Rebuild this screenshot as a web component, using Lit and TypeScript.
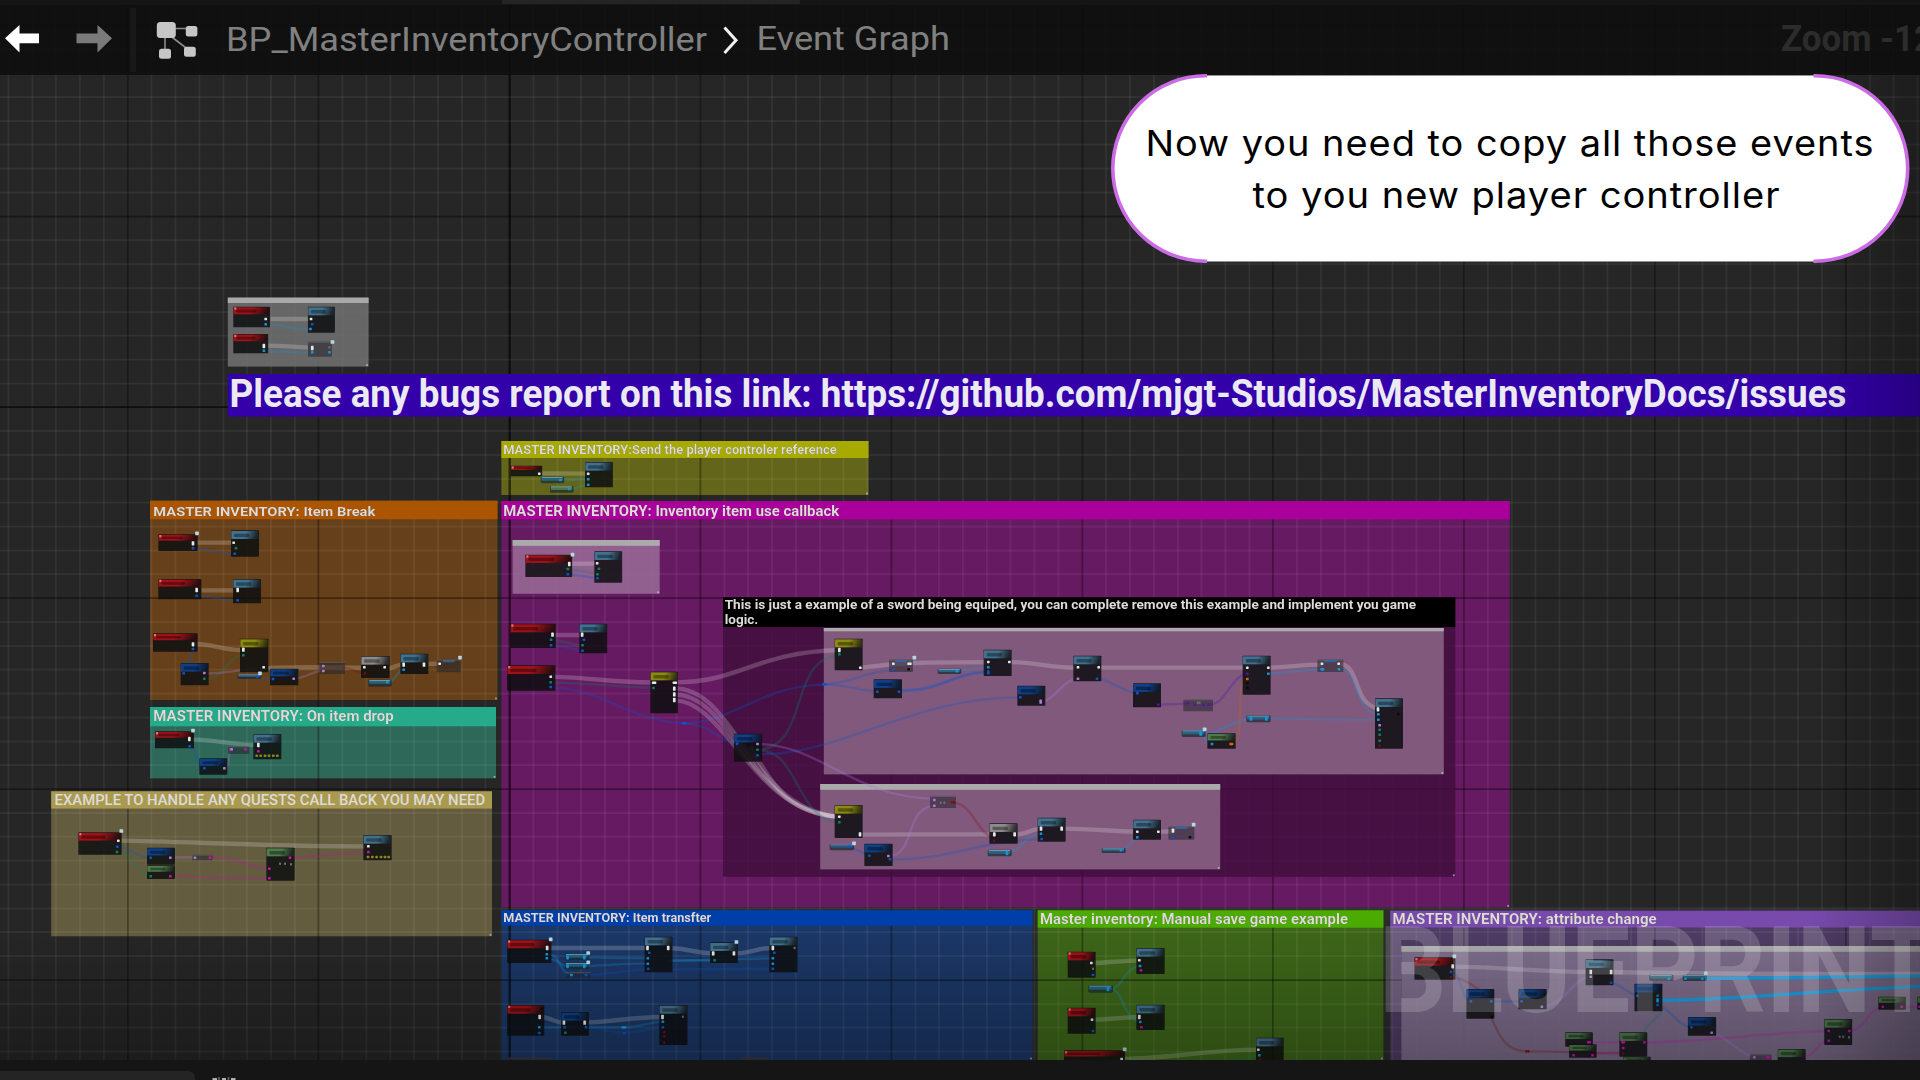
import { LitElement, html, svg, css } from "lit";
import { customElement } from "lit/decorators.js";

/** A free-canvas area with its own local units. Lists are "kind numbers…" entries split by ";". */
interface Region {
  x: number;
  y: number;
  sx: number;
  sy: number;
  wires: string;
  nodes: string;
  pins: string;
}

const COLORS: Record<string, string> = {
  w: "#e8e8e8", b: "#0a55cc", c: "#1496dc", t: "#0a8068", m: "#d00fac",
  v: "#b07ce0", r: "#840a0a", o: "#d8620a", p: "#5510b0", y: "#8a8820",
  k: "#0b0b0d", g: "#6d6d70", s: "#b4d8e4",
};

const REGIONS: Region[] = [
  // link box at the top
  {
    x: 0, y: 0, sx: 1.6333, sy: 3,
    wires: `W 442 957 C 470 957 480 957 503 957; W 438 1037 C 470 1037 480 1042 503 1042; c 442 974 C 470 976 475 988 503 990; c 438 1054 C 470 1054 480 1058 503 1058`,
    nodes: `R 381 920 441 982; L 503 920 547 998; R 381 1002 438 1060; e 503 1024 542 1070`,
    pins: `w 434 957; c 434 973; w 508 957; b 510 973; c 507 987; W 431 1038; c 431 1052; W 510 1044; c 510 1057; g 538 1042; c 538 1057; s 543 1026`,
  },
  // item break, item drop, quests
  {
    x: 40, y: 480, sx: 3, sy: 3,
    wires: `W 470 188 C 500 188 550 188 578 188; b 466 207 C 500 205 540 220 578 220; W 484 331 C 520 331 550 331 580 331; b 476 348 C 510 348 550 361 586 361;
      W 465 492 C 510 490 550 510 602 510; t 500 595 C 560 590 560 530 608 527; v 500 580 C 570 582 620 562 690 562; W 685 564 C 770 560 850 562 965 563; b 455 515 C 455 530 445 540 440 550; v 765 595 C 800 595 810 575 845 573; r 905 563 C 940 563 950 580 970 580; W 1045 565 C 1060 565 1070 554 1085 554; W 1165 552 L 1195 551; c 1050 605 C 1065 600 1070 575 1090 568; b 665 595 L 695 597;
      W 455 778 C 520 778 580 795 650 795; b 455 800 C 475 815 470 850 485 862; v 558 862 C 575 850 560 815 572 808;
      W 240 1082 C 420 1084 720 1100 980 1099; b 236 1100 C 280 1105 280 1130 330 1132; t 236 1116 C 280 1120 290 1180 328 1188; v 400 1132 L 460 1132; m 515 1132 C 590 1132 620 1160 685 1166; m 400 1189 C 500 1190 600 1195 685 1195; m 760 1133 C 850 1130 900 1118 980 1117`,
    nodes: `R 355 163 473 213; L 573 151 657 230; R 355 297 484 358; L 579 297 663 370; R 339 460 473 515; Y 600 476 685 577; D 422 549 506 616; u 592 582 664 597; D 690 566 775 616; e 838 545 915 582; G 963 528 1049 594; C 985 599 1055 620; L 1081 521 1165 582; f 1190 538 1262 577;
      R 345 754 462 805; L 640 762 724 838; e 564 798 628 822; D 478 835 562 884;
      R 115 1057 245 1124; D 321 1103 405 1154; N 321 1156 405 1197; e 457 1123 518 1141; N 679 1103 764 1202; L 970 1065 1055 1141`,
    pins: `W 459 190; b 459 205; s 471 160; w 581 188; t 588 205; b 584 221; W 470 330; b 470 347; W 593 330; b 593 361; W 459 493; b 459 507; W 610 509; t 610 526; w 671 562; b 431 580; v 493 579; t 493 596; s 660 580; b 652 590; b 699 597; v 761 596; v 850 558; v 850 573; w 973 562; r 975 580; w 1034 562; c 1042 607; W 1091 554; c 1091 569; W 1152 554; w 1199 551; s 1260 533;
      W 448 777; b 449 799; s 459 752; m 571 808; v 575 808; m 616 808; W 655 795; m 655 814; y 650 827; y 662 827; y 675 827; y 687 827; y 700 827; y 712 827; b 493 865; v 553 865;
      w 235 1082; b 232 1100; t 231 1116; s 244 1053; b 332 1133; v 391 1133; t 332 1189; m 391 1189; v 465 1133; m 510 1133; m 750 1133; m 688 1166; m 688 1195; g 753 1153; g 735 1151; g 720 1151; w 985 1099; m 985 1116; y 984 1131; y 997 1131; y 1010 1131; y 1023 1131; y 1035 1131; y 1046 1131`,
  },
  // player controller reference and the left half of the item use callback
  {
    x: 490, y: 430, sx: 2.8, sy: 3,
    wires: `W 140 130 L 272 131; c 205 150 L 275 148; c 230 176 C 250 175 250 165 275 164; W 228 401 L 296 401; t 220 417 L 300 431; b 220 432 L 300 445; W 180 615 L 256 615; t 180 630 L 260 648; b 180 646 L 260 662;
      W 172 740 C 290 744 360 758 460 757; t 172 758 C 290 758 360 773 458 773; b 172 772 C 330 780 380 870 540 880; b 540 880 C 620 880 640 935 690 941; b 540 880 C 680 880 760 765 935 764;
      W 520 757 C 700 757 740 668 975 660; W 516 775 C 690 775 720 1130 975 1160; W 516 793 C 680 793 720 1140 975 1160; W 516 811 C 660 811 740 1150 975 1160; W 730 950 C 800 1090 850 1150 975 1160;
      t 749 960 C 900 950 830 690 978 675; t 749 960 C 870 960 850 1165 978 1177; b 749 972 C 980 980 1180 800 1485 802; v 749 942 C 930 945 1010 1100 1242 1106`,
    nodes: `R 58 107 146 139; L 266 96 344 172; C 142 140 208 160; j 168 168 234 188; R 99 374 230 441; L 292 364 370 458; R 57 581 184 654; L 250 581 328 670; R 48 706 183 782; Y 449 725 526 850; D 683 911 762 995`,
    pins: `w 138 131; w 275 131; c 275 148; c 275 164; c 197 150; c 222 177; s 231 374; W 222 402; t 218 417; b 218 433; w 300 400; t 305 416; t 301 433; b 301 445; W 175 614; t 171 629; b 171 646; W 258 614; b 263 629; t 259 646; b 259 662; w 170 740; t 170 757; b 170 771; w 457 758; w 462 758; t 458 774; w 515 758; w 520 758; W 516 776; W 516 793; W 516 810; b 692 941; v 749 942; t 749 959; b 749 976; b 540 880; b 546 880`,
  },
  // sword example, left part
  {
    x: 800, y: 580, sx: 3, sy: 3,
    wires: `W 185 263 C 350 240 440 250 565 246; W 628 246 C 720 246 740 265 835 263; W 895 263 L 1342 263; b 72 313 C 160 310 190 275 270 271; b 72 313 C 140 313 170 332 230 334; c 470 272 C 510 270 520 263 560 262; b 300 333 C 430 333 440 285 560 277; b 300 330 C 430 330 460 278 560 274; v 728 365 C 770 355 785 300 835 296; b 895 296 C 930 300 960 330 1010 341; p 1075 374 C 1120 372 1130 371 1160 371;
      W 180 764 C 330 763 430 763 580 763; v 262 828 C 350 828 310 690 400 677; r 460 668 C 520 672 530 760 580 772; b 275 838 C 450 840 520 785 722 777; c 620 818 C 670 812 670 765 722 761; W 645 764 C 690 762 690 747 722 746; W 785 746 C 880 746 930 754 1010 755; c 965 811 C 990 805 990 780 1012 772; b 150 800 L 205 826`,
    nodes: `Y 104 176 188 271; f 267 238 339 276; D 221 298 306 355; C 413 266 484 282; L 551 209 635 288; D 652 317 736 377; L 820 227 904 304; D 999 310 1083 382;
      Y 104 675 188 774; u 89 792 162 811; D 193 791 278 858; e 390 647 468 684; G 568 730 653 791; C 563 809 635 829; L 713 713 797 785; C 905 804 977 819; L 999 719 1083 779`,
    pins: `W 118 210; t 118 223; w 181 263; w 280 251; w 326 251; w 331 251; b 280 268; k 326 268; s 343 233; b 70 313; b 76 313; b 232 335; b 297 335; c 471 274; w 565 246; c 565 262; B 565 277; w 628 246; b 661 352; V 722 365; w 834 262; v 834 296; w 896 262; b 891 296; b 1012 340; p 1075 374;
      w 118 710; t 118 727; W 180 763; s 162 790; b 148 800; b 208 827; v 265 828; b 270 838; v 403 660; v 403 677; r 455 667; r 462 667; g 422 668; g 433 668; W 583 763; W 644 763; r 582 782; C 621 819; W 723 746; c 723 761; b 725 777; W 785 746; c 963 811; w 1012 755; c 1012 772`,
  },
  // sword example, right part
  {
    x: 1140, y: 580, sx: 3, sy: 3,
    wires: `p 210 374 C 260 370 270 290 322 281; o 278 492 C 320 480 280 300 322 297; W 385 263 C 450 262 480 254 545 254; c 385 281 C 460 276 480 270 545 269; W 600 252 C 660 255 640 375 714 385; c 600 268 C 660 270 640 395 714 403; c 385 415 C 500 418 600 419 714 419; c 190 461 C 250 460 270 420 330 417; c 192 461 C 192 485 200 490 216 491; W 55 755 L 96 754`,
    nodes: `L 308 227 392 344; e 130 357 219 394; C 125 450 197 471; C 319 406 392 427; N 202 460 287 506; f 532 238 610 276; L 705 355 789 506; f 85 738 163 779`,
    pins: `w 322 263; p 322 281; o 322 297; k 322 309; k 322 324; w 385 263; c 385 281; p 144 370; p 206 374; p 165 374; g 173 368; g 179 368; p 190 374; C 182 461; s 194 448; C 333 416; C 379 416; c 216 492; o 272 492; o 276 492; w 546 251; w 596 251; c 545 268; c 549 268; c 597 268; W 714 388; c 715 403; c 715 419; v 719 436; t 719 449; t 719 464; t 719 482; r 719 497; k 775 402; w 55 755; W 99 752; s 161 734; b 99 772; k 150 772`,
  },
  // item transfer
  {
    x: 490, y: 890, sx: 2.8, sy: 3,
    wires: `W 160 174 L 441 174; W 500 174 C 560 174 570 190 625 190; W 685 190 C 740 190 740 174 790 174; c 160 193 C 200 190 190 245 225 254; c 160 205 C 190 205 190 225 215 228; c 265 202 L 440 205; c 265 228 C 350 225 380 220 440 221; c 500 212 L 790 205; c 500 212 L 620 212; b 275 255 C 350 252 380 240 440 238; b 500 238 L 790 236; W 140 381 C 170 381 180 398 207 398; W 265 398 C 350 395 400 381 480 381; c 150 412 C 260 410 330 412 372 412; c 372 412 C 420 412 440 397 484 395; b 270 412 C 320 412 340 428 376 428; b 376 428 C 430 428 450 412 484 412`,
    nodes: `R 48 149 172 219; L 433 140 511 247; L 616 157 694 219; L 782 140 861 247; C 210 191 277 211; C 210 218 277 238; e 214 246 282 263; R 48 345 152 437; D 199 366 277 437; L 474 345 553 465`,
    pins: `W 160 174; c 159 193; c 159 205; s 170 148; s 275 189; s 275 217; C 217 202; C 264 202; C 217 228; C 264 228; c 228 255; b 269 255; W 441 174; b 446 188; c 442 205; c 442 221; b 443 236; W 499 174; W 625 190; t 629 211; W 683 190; s 690 156; W 792 174; b 796 188; c 792 205; c 792 221; b 792 236; g 853 174; W 139 381; c 138 412; b 138 429; k 145 356; W 207 398; b 209 412; t 211 428; W 265 398; b 269 412; c 372 412; c 378 412; b 376 429; W 483 381; c 484 395; b 484 412; r 488 427; r 488 439; r 488 457; g 540 380`,
  },
  // manual save
  {
    x: 1020, y: 890, sx: 3, sy: 3,
    wires: `W 215 219 C 260 219 300 212 358 211; W 216 389 C 260 389 300 382 358 381; c 270 298 C 310 295 310 235 358 228; c 270 298 C 315 300 305 380 358 396; W 305 507 C 450 505 560 480 716 479; t 640 512 C 670 505 690 500 716 496`,
    nodes: `R 143 185 227 263; L 349 174 434 252; J 205 286 279 308; R 143 353 227 431; L 349 344 434 420; R 132 481 315 530; L 708 443 791 530`,
    pins: `w 214 219; g 219 236; b 219 255; w 358 211; c 360 228; m 363 241; C 264 297; w 216 389; b 219 423; W 358 381; c 361 396; m 364 412; s 314 478; w 305 507; w 715 479; c 718 496; r 721 508`,
  },
  // attribute change
  {
    x: 1380, y: 890, sx: 2.9037, sy: 3,
    wires: `W 210 230 C 350 230 450 246 610 246; W 670 246 C 900 252 1200 252 1568 252; b 210 245 C 240 260 235 325 262 334; r 207 262 C 260 265 280 300 290 300; r 322 380 C 350 450 370 484 428 484; r 428 484 C 520 484 600 490 705 490; b 322 334 L 410 334; v 470 350 C 540 345 560 262 612 260; b 672 278 C 700 285 720 310 745 316; X 935 266 C 1150 264 1350 260 1568 258; X 806 331 C 1050 330 1200 305 1568 289; b 806 345 C 850 360 860 405 903 411; t 818 365 C 790 400 770 410 765 428; m 770 458 C 950 455 1150 425 1302 423; m 605 457 L 705 457; m 616 495 C 650 490 670 485 705 484; m 1365 423 C 1410 415 1420 355 1460 350; m 1520 350 L 1568 352; m 1235 500 C 1265 495 1270 455 1302 452; v 962 428 C 1010 440 1040 490 1087 502`,
    nodes: `R 100 202 219 269; D 251 297 332 386; D 402 297 484 358; L 597 208 678 286; D 739 281 820 364; C 782 254 852 273; C 879 254 949 273; D 894 381 976 437; N 538 427 618 470; N 549 463 629 503; N 695 427 776 500; N 706 500 786 530; N 1290 387 1371 465; N 1447 320 1527 359; N 1560 320 1620 359; N 1155 477 1236 530; e 1074 492 1137 525`,
    pins: `s 216 199; W 211 229; b 206 245; r 206 262; b 264 334; b 323 334; k 325 380; b 411 334; v 470 350; W 612 246; v 612 260; W 671 246; b 671 278; b 747 317; t 806 317; C 806 331; b 806 345; c 839 266; c 887 266; c 936 266; s 946 250; b 904 412; v 963 428; m 605 457; m 609 457; m 562 496; m 617 496; m 704 457; m 708 457; m 706 474; r 706 490; m 768 457; r 425 484; r 431 484; m 1303 423; m 1303 452; m 1363 423; g 1362 442; g 1335 440; g 1345 440; m 1460 350; m 1515 350; m 1566 350; v 1087 502; m 1124 502; m 1129 502`,
  },
];

interface Box { x: number; y: number; r: number; b: number; body: string; head: string; hh: number; }

const BOXES: Box[] = [
  { x: 150, y: 500.7, r: 497.5, b: 700, body: "#66401a", head: "#ab5500", hh: 18.6 },
  { x: 150, y: 707, r: 496, b: 778.4, body: "#2e6858", head: "#25aa8a", hh: 19.3 },
  { x: 51.2, y: 791.3, r: 492, b: 936.3, body: "#645c3e", head: "#aa9a50", hh: 17.3 },
  { x: 501.4, y: 441, r: 868.5, b: 495, body: "#63661a", head: "#a7aa00", hh: 17 },
  { x: 501.4, y: 501, r: 1509.7, b: 907.4, body: "#661a62", head: "#aa009b", hh: 18.4 },
  { x: 501.6, y: 910.3, r: 1032.5, b: 1060, body: "#1b3766", head: "#003eaa", hh: 15.4 },
  { x: 1037.7, y: 910.3, r: 1383.4, b: 1060, body: "#3d6619", head: "#4cab00", hh: 17.4 },
  { x: 1390.3, y: 910.7, r: 1930, b: 1060, body: "#4e3b63", head: "#774aab", hh: 16.8 },
];

const SUBS: Box[] = [
  { x: 227.8, y: 297.6, r: 368.6, b: 366.6, body: "rgba(111,111,111,.88)", head: "#a9a9a9", hh: 5.4 },
  { x: 512.6, y: 540, r: 659.7, b: 593.8, body: "rgba(151,104,149,.9)", head: "#aaaaaa", hh: 5.8 },
  { x: 723, y: 597.3, r: 1455.3, b: 876.8, body: "rgba(62,14,60,.8)", head: "#000000", hh: 29.8 },
  { x: 823.8, y: 628, r: 1443.8, b: 774.4, body: "rgba(133,95,130,.92)", head: "#aaaaaa", hh: 3.3 },
  { x: 820.2, y: 784, r: 1220.2, b: 869.4, body: "rgba(133,95,130,.92)", head: "#aaaaaa", hh: 5.8 },
  { x: 1401.4, y: 946, r: 1930, b: 1060, body: "rgba(130,114,143,.9)", head: "#a9a8aa", hh: 5.8 },
];

/** x, baseline, drawn length, font size, text */
const LABELS: [number, number, number, number, string][] = [
  [153.3, 516, 222, 13.6, "MASTER INVENTORY: Item Break"],
  [153.3, 720.8, 240.5, 13.8, "MASTER INVENTORY: On item drop"],
  [503.2, 454.4, 333.5, 13.6, "MASTER INVENTORY:Send the player controler reference"],
  [503.2, 515.8, 336, 13.8, "MASTER INVENTORY: Inventory item use callback"],
  [503.2, 922, 208, 13.2, "MASTER INVENTORY: Item transfter"],
  [1040, 924, 308, 13.8, "Master inventory: Manual save game example"],
  [1392.6, 924, 264, 13.8, "MASTER INVENTORY: attribute change"],
  [724.7, 609.2, 691.5, 12.6, "This is just a example of a sword being equiped, you can complete remove this example and implement you game"],
  [724.7, 623.6, 33.5, 12.6, "logic."],
];

const HEADER_FILL: Record<string, string> = {
  R: "url(#hr)", L: "url(#hl)", D: "url(#hd)", Y: "url(#hy)", G: "url(#hg)", N: "url(#hn)",
};

const split = (s: string) => s.split(";").map((e) => e.trim()).filter(Boolean);

function wire(entry: string) {
  const kind = entry[0];
  const d = "M" + entry.slice(1);
  const wide = kind === "W";
  const stroke = wide ? "#fff" : kind === "X" ? "#12a0e6" : COLORS[kind];
  return svg`<path d=${d} fill="none" stroke=${stroke} vector-effect="non-scaling-stroke"
    stroke-width=${wide ? 4.4 : kind === "X" ? 3.4 : 2.4}
    stroke-opacity=${wide ? 0.2 : kind === "X" ? 0.9 : 0.28}></path>`;
}

function node(entry: string, k: number) {
  const [kind, a, b, c, d] = entry.split(/\s+/);
  const x = +a, y = +b, w = +c - x, h = +d - y;
  if (HEADER_FILL[kind]) {
    const hh = kind === "R" ? Math.min(24, h * 0.34) : Math.min(24, h * 0.42);
    return svg`<g>
      <rect x=${x} y=${y} width=${w} height=${h} rx=${2 * k} fill="#0e0f10" fill-opacity=".86"></rect>
      <rect x=${x + k} y=${y + 2} width=${w - 3 * k} height=${hh} fill=${HEADER_FILL[kind]}></rect>
      <rect x=${x + 9 * k} y=${y + hh * 0.42} width=${w * 0.55} height=${hh * 0.42} rx=${4 * k} fill="#000" fill-opacity=".36"></rect>
      ${kind === "R" ? svg`<rect x=${x + 3 * k} y=${y + 2} width=${6 * k} height="7" fill="#e8a8a8" fill-opacity=".7"></rect>` : ""}
    </g>`;
  }
  if (kind === "e" || kind === "f") {
    return svg`<g>
      <rect x=${x} y=${y} width=${w} height=${h} rx=${2 * k} fill="#25252b" fill-opacity=".55"></rect>
      <rect x=${x} y=${y} width=${w} height="4" fill="#999" fill-opacity=".3"></rect>
      ${kind === "f" ? svg`<rect x=${x + w * 0.25} y=${y + 2} width=${w * 0.5} height="7" rx="3" fill="#2f6db0" fill-opacity=".75"></rect>` : ""}
    </g>`;
  }
  const tint = kind === "u" ? "#2c5f9a" : kind === "j" ? "#5d8a5a" : "#22789c";
  return svg`<g>
    <rect x=${x} y=${y} width=${w} height=${h} rx="4" fill="#1b2930" fill-opacity=".72"></rect>
    <rect x=${x + 2} y=${y + 1} width=${w - 6} height=${h * 0.55} rx="3" fill=${tint} fill-opacity=".7"></rect>
    <rect x=${x + 3} y=${y + 1} width=${w - 8} height="3" fill="#c8dde6" fill-opacity=".42"></rect>
  </g>`;
}

function pin(entry: string, k: number) {
  const [kind, a, b] = entry.split(/\s+/);
  const tall = kind !== kind.toLowerCase();
  const key = kind.toLowerCase();
  const w = (key === "s" ? 11 : key === "g" || key === "r" ? 6 : 8) * k;
  const h = tall ? 13 : key === "s" ? 11 : 7.5;
  return svg`<rect x=${+a - w / 2} y=${+b - h / 2} width=${w} height=${h} rx=${2 * k} fill=${COLORS[key]}></rect>`;
}

@customElement("blueprint-canvas")
class BlueprintCanvas extends LitElement {
  static styles = css`
    :host { display: block; }
    .canvas { display: block; width: 1920px; height: 1055px; }
    .label { font-family: Roboto, "Liberation Sans", sans-serif; font-weight: 700; fill: #dedad8; }
    .shadowed { filter: drop-shadow(0.8px 0.8px 0.4px rgba(0, 0, 0, 0.55)); }
    .light { font-weight: 500; }
    .banner { font-size: 38px; fill: #ebe9f2; }
    .mark { font-size: 120px; fill: #fff; fill-opacity: 0.17; }
  `;

  private grid() {
    const cell = 190.9 / 8;
    const lines = [];
    for (let i = -5; i < 76; i++) {
      const x = Math.round((127.8 + i * cell) * 2) / 2;
      const major = i % 8 === 0;
      lines.push(svg`<rect x=${x - 1} y="5" width=${i === 16 ? 2.4 : 1.8} height="1055"
        fill=${major ? "#000" : "#fff"} fill-opacity=${i === 16 ? 0.6 : major ? 0.32 : 0.06}></rect>`);
    }
    for (let i = -8; i < 36; i++) {
      const y = Math.round((216.3 + i * cell) * 2) / 2;
      const major = i % 8 === 0;
      lines.push(svg`<rect x="0" y=${y - 0.8} width="1920" height="1.8"
        fill=${major ? "#000" : "#fff"} fill-opacity=${i === 8 ? 0.6 : major ? 0.36 : 0.06}></rect>`);
    }
    return lines;
  }

  private box(b: Box, part: "body" | "head" | "all") {
    const w = b.r - b.x;
    return svg`
      ${part !== "head" ? svg`<rect x=${b.x} y=${b.y} width=${w} height=${b.b - b.y} fill=${b.body}></rect>` : ""}
      ${part !== "body" ? svg`<rect x=${b.x} y=${b.y} width=${w} height=${b.hh} fill=${b.head}></rect>
        <rect x=${b.r - 2.4} y=${b.b - 2.4} width="1.8" height="1.8" fill="#ddd" fill-opacity=".6"></rect>` : ""}
    `;
  }

  private gradient(id: string, from: string, to: string) {
    return svg`<linearGradient id=${id} x1="0" y1="0" x2="1" y2=".12">
      <stop offset="0" stop-color=${from}></stop><stop offset=".55" stop-color=${from}></stop>
      <stop offset="1" stop-color=${to}></stop></linearGradient>`;
  }

  render() {
    const place = (r: Region) => `translate(${r.x} ${r.y}) scale(${1 / r.sx} ${1 / r.sy})`;
    return html`<svg class="canvas" viewBox="0 5 1920 1055">
      <defs>
        ${this.gradient("hr", "#a01218", "#2a0d0f")}
        ${this.gradient("hl", "#41718f", "#1a242b")}
        ${this.gradient("hd", "#0f3f85", "#0f1a2b")}
        ${this.gradient("hy", "#8c8a10", "#33320f")}
        ${this.gradient("hg", "#8c8a8a", "#2e2c2c")}
        ${this.gradient("hn", "#4e7a4c", "#1d271e")}
        <linearGradient id="shadeB" x1="0" y1="0" x2="0" y2="1">
          <stop offset="0" stop-opacity="0"></stop><stop offset="1" stop-opacity=".26"></stop>
        </linearGradient>
        <linearGradient id="shadeR" x1="0" y1="0" x2="1" y2="0">
          <stop offset="0" stop-opacity="0"></stop><stop offset="1" stop-opacity=".24"></stop>
        </linearGradient>
      </defs>
      <rect x="0" y="5" width="1920" height="1055" fill="#262626"></rect>
      <rect x="500" y="907" width="1420" height="153" fill="#2b2b2b"></rect>
      ${BOXES.map((b) => this.box(b, "body"))}
      ${this.grid()}
      ${BOXES.map((b) => this.box(b, "head"))}
      ${SUBS.map((b) => this.box(b, "all"))}
      <rect x="227.8" y="374" width="1700" height="42.6" fill="#3300aa"></rect>
      <text class="label banner" x="229.5" y="407.3" textLength="1617" lengthAdjust="spacingAndGlyphs">Please any bugs report on this link: https://github.com/mjgt-Studios/MasterInventoryDocs/issues</text>
      ${LABELS.map(([x, y, len, size, text]) => svg`<text class="label shadowed" x=${x} y=${y} font-size=${size}
        textLength=${len} lengthAdjust="spacingAndGlyphs">${text}</text>`)}
      <text class="label light" x="54.6" y="805" font-size="14" textLength="430.5" lengthAdjust="spacingAndGlyphs">EXAMPLE TO HANDLE ANY QUESTS CALL BACK YOU MAY NEED</text>
      ${REGIONS.map((r) => svg`<g transform=${place(r)}>${split(r.wires).map(wire)}</g>`)}
      ${REGIONS.map((r) => svg`<g transform=${place(r)}>
        ${split(r.nodes).map((n) => node(n, r.sx / 3))}${split(r.pins).map((p) => pin(p, r.sx / 3))}</g>`)}
      <path d="M507 1058.5h45M740 1058.5h28" stroke="#3a3a3c" stroke-width="2"></path>
      <rect x="0" y="930" width="1920" height="130" fill="url(#shadeB)"></rect>
      <rect x="1810" y="5" width="110" height="1055" fill="url(#shadeR)"></rect>
      <text class="label mark" x="1379" y="1011.6" textLength="556" lengthAdjust="spacingAndGlyphs">BLUEPRINT</text>
    </svg>`;
  }
}

@customElement("graph-toolbar")
class GraphToolbar extends LitElement {
  static styles = css`
    :host { display: flex; align-items: center; height: 70px; background: rgba(13, 13, 13, 0.86);
      font-family: Roboto, "Liberation Sans", sans-serif; color: #808080; white-space: nowrap; overflow: hidden; }
    .nav { display: block; width: 130px; height: 70px; flex: none; }
    .rule { width: 6px; height: 64px; background: #191919; flex: none; }
    .icon { width: 88px; height: 70px; flex: none; }
    .text { display: block; height: 70px; flex: none; overflow: visible; }
    .crumb { font-size: 32.5px; fill: #808080; }
    .zoom { font-size: 36px; font-weight: 700; fill: #2c2c2c; }
    .gap { flex: 1; }
  `;
  render() {
    return html`
      <svg class="nav" viewBox="0 5 130 70">
        <path d="M5 38.3 19.5 25v8.4H39v9.8H19.5v9.2z" fill="#fff"></path>
        <path d="M112 38.3 97.5 25v8.4H76.5v9.8h21v9.2z" fill="#7a7a7a"></path>
      </svg>
      <div class="rule"></div>
      <svg class="icon" viewBox="136 5 88 70">
        <path d="M166 28.500H190M165 34V52M168 34 190 51" stroke="#8a8a8a" stroke-width="1.6" fill="none"></path>
        <g fill="#c6c6c6">
          <rect x="156.8" y="22" width="19" height="16" rx="3.5"></rect>
          <rect x="185.8" y="26" width="11.6" height="10.6" rx="2.5"></rect>
          <rect x="159" y="48.8" width="12" height="10" rx="2.5"></rect>
          <rect x="184" y="46.8" width="11.8" height="10" rx="2.5"></rect>
        </g>
      </svg>
      <svg class="text" width="496" viewBox="224 5 496 70">
        <text class="crumb" x="226" y="51" textLength="481" lengthAdjust="spacingAndGlyphs">BP_MasterInventoryController</text>
      </svg>
      <svg class="text" width="36" viewBox="720 5 36 70">
        <path d="M724.5 27.5 736 40.3 724.5 53" fill="none" stroke="#f0f0f0" stroke-width="3"></path>
      </svg>
      <svg class="text" width="200" viewBox="756 5 200 70">
        <text class="crumb" x="756.5" y="49.7" textLength="193.500" lengthAdjust="spacingAndGlyphs">Event Graph</text>
      </svg>
      <div class="gap"></div>
      <svg class="text" width="140" viewBox="1780 5 140 70">
        <text class="zoom" x="1781" y="51.3" textLength="153" lengthAdjust="spacingAndGlyphs">Zoom -12</text>
      </svg>
    `;
  }
}

@customElement("callout-bubble")
class CalloutBubble extends LitElement {
  static styles = css`
    :host { display: block; }
    .bubble { display: block; width: 804px; height: 192px; }
    .line { font-family: Inter, Lato, sans-serif; font-size: 36px; font-weight: 400; letter-spacing: 0.9px; fill: #000; }
  `;
  render() {
    return html`<svg class="bubble" viewBox="1108 72 804 192">
      <path d="M1205.5 75.6H1815A92.900 92.900 0 0 1 1815 261.4H1205.5A92.900 92.900 0 0 1 1205.5 75.6z" fill="#fff"></path>
      <path d="M1207 75.8H1205.5A92.700 92.700 0 0 0 1205.5 261.200H1207M1813.5 75.8H1815A92.700 92.700 0 0 1 1815 261.200H1813.5"
        fill="none" stroke="#cb6ce6" stroke-width="3.6"></path>
      <text class="line" x="1145.5" y="155.8" textLength="729" lengthAdjust="spacingAndGlyphs">Now you need to copy all those events</text>
      <text class="line" x="1252.5" y="207.8" textLength="528" lengthAdjust="spacingAndGlyphs">to you new player controller</text>
    </svg>`;
  }
}

@customElement("app-root")
class AppRoot extends LitElement {
  static styles = css`
    :host { display: grid; grid-template-rows: 5px 1055px 20px; width: 1920px; height: 1080px;
      overflow: hidden; background: #151515; }
    .tabs { padding-left: 502px; }
    .tab { width: 298px; height: 4px; background: #242424; }
    .graph { position: relative; overflow: hidden; }
    .bar { position: absolute; left: 0; right: 0; top: 0; }
    .callout { position: absolute; left: 1108px; top: 67px; }
    .status { display: flex; align-items: flex-end; }
    .drawer { width: 195px; height: 9px; background: #242424; border-top-right-radius: 7px; }
    .marks { width: 30px; height: 4px; margin-left: 15px; }
  `;
  render() {
    return html`
      <div class="tabs"><div class="tab"></div></div>
      <div class="graph">
        <blueprint-canvas></blueprint-canvas>
        <graph-toolbar class="bar"></graph-toolbar>
        <callout-bubble class="callout"></callout-bubble>
      </div>
      <div class="status">
        <div class="drawer"></div>
        <svg class="marks" viewBox="0 0 30 4">
          <path d="M2.500 3h4.500M12 3h4M21 3h4.500" stroke="#b0b0b0" stroke-width="1.8"></path>
          <path d="M9 1v3M18.500 1v3" stroke="#666" stroke-width="1.6"></path>
        </svg>
      </div>
    `;
  }
}
